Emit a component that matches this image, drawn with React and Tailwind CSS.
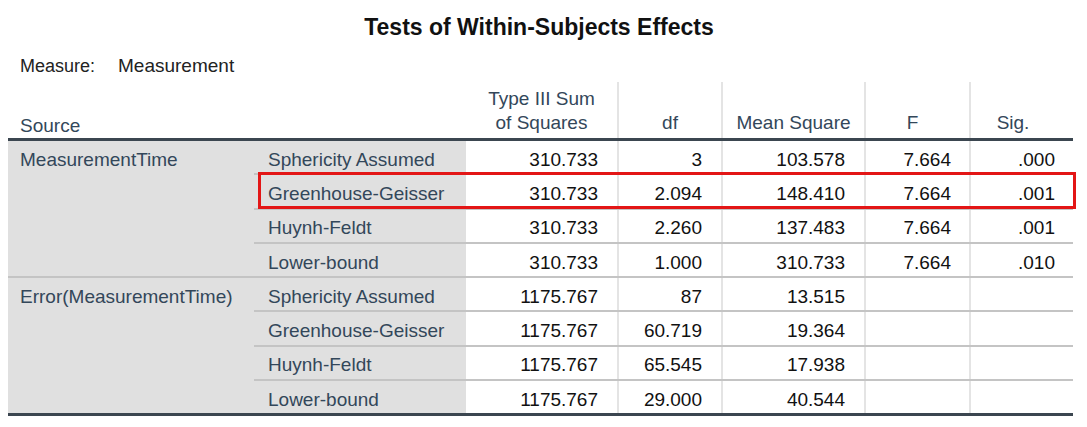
import React from "react";

const groups = [
  {
    label: "MeasurementTime",
    rows: [
      ["Sphericity Assumed", "310.733", "3", "103.578", "7.664", ".000"],
      ["Greenhouse-Geisser", "310.733", "2.094", "148.410", "7.664", ".001"],
      ["Huynh-Feldt", "310.733", "2.260", "137.483", "7.664", ".001"],
      ["Lower-bound", "310.733", "1.000", "310.733", "7.664", ".010"],
    ],
  },
  {
    label: "Error(MeasurementTime)",
    rows: [
      ["Sphericity Assumed", "1175.767", "87", "13.515", "", ""],
      ["Greenhouse-Geisser", "1175.767", "60.719", "19.364", "", ""],
      ["Huynh-Feldt", "1175.767", "65.545", "17.938", "", ""],
      ["Lower-bound", "1175.767", "29.000", "40.544", "", ""],
    ],
  },
];

function Row({ r, last }) {
  const h = last ? "h-[32.25px]" : "h-[34.25px] border-b-2 border-[#c4c4c4]";
  return (
    <div className={"flex " + h}>
      <div className="w-[212px] bg-[#e0e0e0] flex items-center pt-[6px] pl-[14px] text-[#33475a] whitespace-nowrap">
        {r[0]}
      </div>
      <div className="w-[151px] flex items-center justify-end pt-[6px] pr-[19px] text-[#111]">
        {r[1]}
      </div>
      <div className="w-[104px] border-l-2 border-[#e4e4e4] flex items-center justify-end pt-[6px] pr-[19px] text-[#111]">
        {r[2]}
      </div>
      <div className="w-[143px] border-l-2 border-[#e4e4e4] flex items-center justify-end pt-[6px] pr-[19px] text-[#111]">
        {r[3]}
      </div>
      <div className="w-[105px] border-l-2 border-[#e4e4e4] flex items-center justify-end pt-[6px] pr-[18px] text-[#111]">
        {r[4]}
      </div>
      <div className="w-[104px] border-l-2 border-[#e4e4e4] flex items-center justify-end pt-[6px] pr-[18px] text-[#111]">
        {r[5]}
      </div>
    </div>
  );
}

export default function App() {
  return (
    <div
      className="w-[1087px] h-[427px] bg-white overflow-hidden"
      style={{ fontFamily: '"Liberation Sans", Arial, sans-serif' }}
    >
      <div className="pt-[13px] pr-[9px] text-center font-bold text-[23px] leading-[28px] text-[#111]">
        Tests of Within-Subjects Effects
      </div>
      <div className="mt-[14px] pl-[20px] flex items-baseline h-[22px] leading-[22px] text-[#222]">
        <span className="w-[98px] text-[18px]">Measure:</span>
        <span className="text-[19px]">Measurement</span>
      </div>
      <div className="relative mt-[5px] ml-[8px] w-[1065px] text-[19px]">
        {/* Header */}
        <div className="flex h-[59px] border-b-[3px] border-[#3b4650] text-[#33475a]">
          <div className="w-[458px] flex items-end pl-[12px] pb-[1px] leading-[22px]">
            Source
          </div>
          <div className="w-[151px] flex flex-col items-center justify-end pb-[3px] leading-[24px] text-center">
            <span>Type III Sum</span>
            <span>of Squares</span>
          </div>
          <div className="w-[104px] border-l-2 border-[#e4e4e4] flex items-end justify-center pb-[4px] leading-[22px]">
            df
          </div>
          <div className="w-[143px] border-l-2 border-[#e4e4e4] flex items-end justify-center pb-[4px] leading-[22px]">
            Mean Square
          </div>
          <div className="w-[105px] border-l-2 border-[#e4e4e4] flex items-end justify-center pb-[4px] pr-[10px] leading-[22px]">
            F
          </div>
          <div className="w-[104px] border-l-2 border-[#e4e4e4] flex items-end justify-center pb-[4px] pr-[18px] leading-[22px]">
            Sig.
          </div>
        </div>

        {/* Body */}
        {groups.map((g, gi) => (
          <div
            key={gi}
            className={
              "flex " +
              (gi === 0
                ? "border-b-2 border-[#c4c4c4]"
                : "border-b-[3px] border-[#3b4650]")
            }
          >
            <div className="w-[246px] bg-[#e0e0e0] text-[#33475a]">
              <div className="h-[32.25px] flex items-center pt-[6px] pl-[12px] whitespace-nowrap">
                {g.label}
              </div>
            </div>
            <div className="flex flex-col">
              {g.rows.map((r, ri) => (
                <Row key={ri} r={r} last={ri === 3} />
              ))}
            </div>
          </div>
        ))}

        {/* Highlight box */}
        <div className="absolute left-[250px] top-[90px] w-[818px] h-[37px] border-[3px] border-[#e31616] pointer-events-none" />
      </div>
    </div>
  );
}
